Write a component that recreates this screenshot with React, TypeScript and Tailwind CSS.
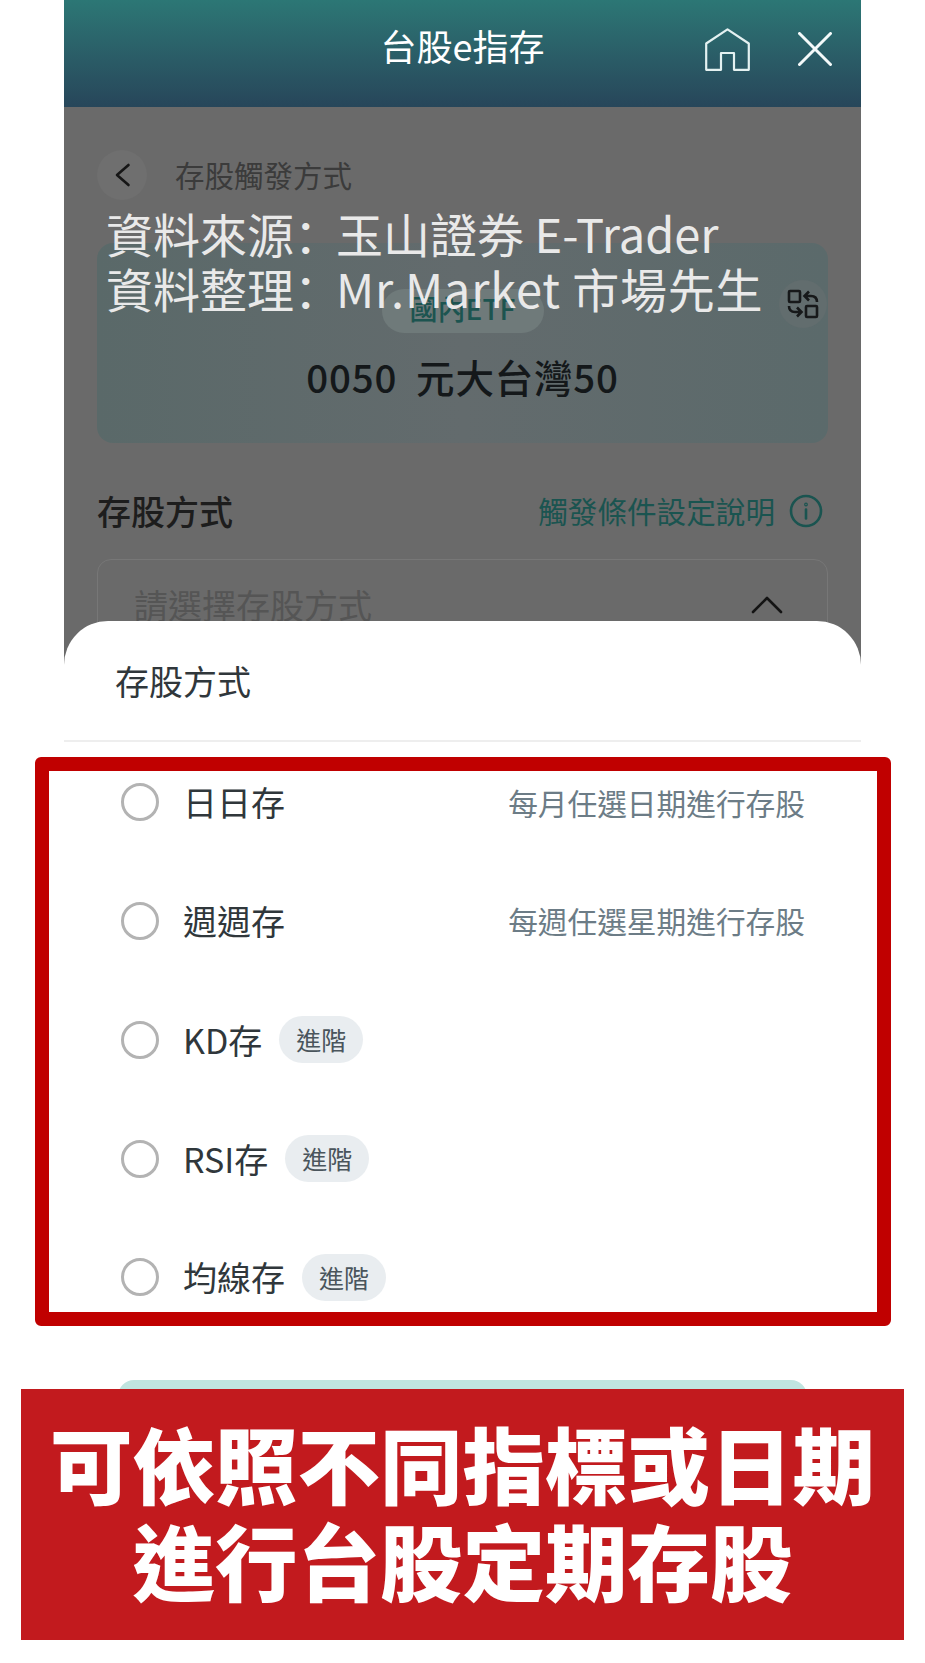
const options = [
  { name: "日日存", hint: "每月任選日期進行存股" },
  { name: "週週存", hint: "每週任選星期進行存股" },
  { name: "KD存", advanced: true },
  { name: "RSI存", advanced: true },
  { name: "均線存", advanced: true },
];

function OptionRow({ name, hint, advanced }: { name: string; hint?: string; advanced?: boolean }) {
  return (
    <div className="flex h-[118.75px] items-center pl-[57px] pr-[56px]">
      <span className="h-[38px] w-[38px] shrink-0 rounded-full border-[3px] border-[#b3b3b3]" />
      <span className="ml-[24px] text-[34px] leading-none text-[#30373b]">{name}</span>
      {advanced && (
        <span className="ml-[17px] flex h-[47px] w-[84px] items-center justify-center rounded-full bg-[#e9edf0] text-[25px] leading-none text-[#4a555c]">
          進階
        </span>
      )}
      {hint && <span className="ml-auto text-[29.7px] leading-none text-[#6c7c86]">{hint}</span>}
    </div>
  );
}

export default function App() {
  return (
    <div className="relative h-[1663px] w-[925px] overflow-hidden bg-white font-['Noto_Sans_CJK_TC',sans-serif]">
      <div className="ml-[64px] w-[797px]">
        {/* Header */}
        <header className="relative flex h-[107px] items-center justify-center bg-gradient-to-b from-[#2c7775] to-[#27465a]">
          <h1 className="mb-[18px] text-[36px] font-normal text-white">台股e指存</h1>
          <svg className="absolute left-[641px] top-[28px]" width="45" height="43" viewBox="0 0 45 43" fill="none" stroke="#e4f1f1" strokeWidth="2.2">
            <path d="M1.2 15.5 22.5 1.3 43.8 15.5V41.8H29V25H16V41.8H1.2Z" strokeLinejoin="round" />
          </svg>
          <svg className="absolute left-[734px] top-[32px]" width="34" height="34" viewBox="0 0 34 34" fill="none" stroke="#f4fafa" strokeWidth="3" strokeLinecap="round">
            <path d="M1.5 1.5 32.5 32.5M32.5 1.5 1.5 32.5" />
          </svg>
        </header>

        {/* Dimmed page behind the sheet */}
        <section className="h-[573px] overflow-hidden bg-[#6a6a6a] px-[33px]">
          <div className="flex items-center pt-[43px]">
            <span className="flex h-[50px] w-[50px] items-center justify-center rounded-full bg-[#6f6f6f]">
              <svg width="17" height="24" viewBox="0 0 17 24" fill="none" stroke="#161616" strokeWidth="2.6" strokeLinecap="round" strokeLinejoin="round">
                <path d="M14.500 2 3 12l11.500 10" />
              </svg>
            </span>
            <span className="ml-[28px] text-[29.5px] leading-none text-[#3b3b3b]">存股觸發方式</span>
          </div>

          <div className="relative mt-[43px] flex h-[200px] flex-col items-center rounded-[16px] bg-gradient-to-r from-[#5a6969] via-[#636b6d] to-[#5b6a6b]">
            <span className="mt-[46px] flex h-[44px] w-[162px] items-center justify-center rounded-full bg-[#6f7a7a] pb-[6px] text-[28px] font-medium leading-none text-[#1c5450]">
              國內ETF
            </span>
            <p className="mt-[24px] text-[38.500px] font-medium leading-none tracking-[0.8px] text-[#14181a]">0050&nbsp; 元大台灣50</p>
            <span className="absolute left-[682px] top-[37px] flex h-[48px] w-[48px] items-center justify-center rounded-full bg-[#626d6e]">
              <svg width="32" height="30" viewBox="0 0 32 30" fill="none" stroke="#17191a" strokeWidth="2.6">
                <rect x="2" y="2" width="11" height="11" rx="1" />
                <rect x="19" y="17" width="11" height="11" rx="1" />
                <path d="M30 13c0-4-2.500-6-6-6h-6M22 2.500 17.500 7l4.500 4.500M2 17c0 4 2.500 6 6 6h6M10 18.500l4.500 4.500-4.500 4.500" />
              </svg>
            </span>
          </div>

          <div className="mt-[51px] flex items-center">
            <h2 className="text-[34px] font-medium leading-none text-[#1d1d1d]">存股方式</h2>
            <span className="ml-auto text-[29.6px] leading-none text-[#1a5450]">觸發條件設定說明</span>
            <svg className="ml-[14px] mr-[5px]" width="34" height="34" viewBox="0 0 34 34" fill="none" stroke="#1a5450" strokeWidth="2.6" strokeLinecap="round">
              <circle cx="17" cy="17" r="15" />
              <path d="M17 15.500v9" />
              <circle cx="17" cy="10.500" r="0.6" />
            </svg>
          </div>

          <div className="mt-[31px] flex h-[130px] items-start rounded-[14px] border border-[#777777] pl-[36px] pr-[44px] pt-[23px]">
            <span className="text-[34px] leading-[44px] text-[#555555]">請選擇存股方式</span>
            <svg className="ml-auto mt-[13px]" width="32" height="18" viewBox="0 0 32 18" fill="none" stroke="#141414" strokeWidth="2.6" strokeLinecap="round" strokeLinejoin="round">
              <path d="M2 16 16 2l14 14" />
            </svg>
          </div>
        </section>

        {/* Bottom sheet */}
        <section className="relative -mt-[59px] rounded-t-[44px] bg-white">
          <div className="flex h-[121px] items-start border-b-2 border-[#eeeeee] pl-[51px] pt-[43px]">
            <h2 className="text-[34px] font-normal leading-none text-[#30373b]">存股方式</h2>
          </div>
          <div className="pt-[1px]">
            {options.map((o) => (
              <OptionRow key={o.name} {...o} />
            ))}
          </div>
          <div className="mx-[54px] mt-[43px] h-[70px] rounded-[16px] bg-[#c0e5e0]" />
        </section>
      </div>

      {/* Annotations pasted over the screenshot */}
      <div className="absolute left-[106px] top-[205px] text-[47px] leading-[55px] text-[#e9e9e9]">
        <p className="whitespace-nowrap">資料來源<span className="mr-[-5px] font-['Noto_Sans_CJK_SC']">：</span>玉山證券 E-Trader</p>
        <p className="whitespace-nowrap">資料整理<span className="mr-[-5px] font-['Noto_Sans_CJK_SC']">：</span><span className="tracking-[0.8px]">Mr.Market 市場先生</span></p>
      </div>
      <div className="absolute left-[35px] top-[757px] h-[569px] w-[856px] rounded-[6px] border-[14px] border-[#c00000]" />
      <div className="absolute left-[21px] top-[1389px] flex h-[251px] w-[883px] flex-col items-center bg-[#c21a1e] pt-[25px] text-[82.5px] font-black leading-[97px] text-white">
        <p>可依照不同指標或日期</p>
        <p>進行台股定期存股</p>
      </div>
    </div>
  );
}
